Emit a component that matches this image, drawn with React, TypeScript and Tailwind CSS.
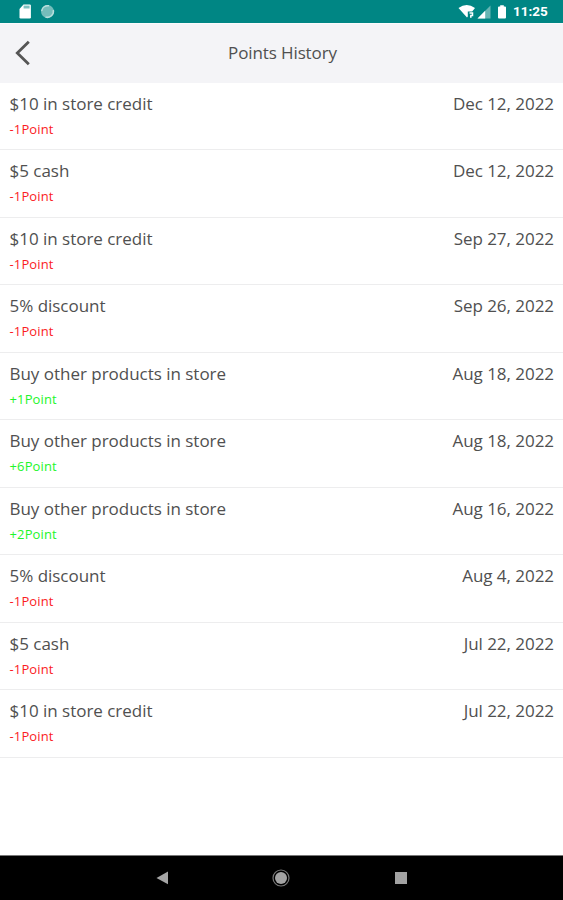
type Entry = { title: string; points: string; date: string };

const entries: Entry[] = [
  { title: "$10 in store credit", points: "-1Point", date: "Dec 12, 2022" },
  { title: "$5 cash", points: "-1Point", date: "Dec 12, 2022" },
  { title: "$10 in store credit", points: "-1Point", date: "Sep 27, 2022" },
  { title: "5% discount", points: "-1Point", date: "Sep 26, 2022" },
  { title: "Buy other products in store", points: "+1Point", date: "Aug 18, 2022" },
  { title: "Buy other products in store", points: "+6Point", date: "Aug 18, 2022" },
  { title: "Buy other products in store", points: "+2Point", date: "Aug 16, 2022" },
  { title: "5% discount", points: "-1Point", date: "Aug 4, 2022" },
  { title: "$5 cash", points: "-1Point", date: "Jul 22, 2022" },
  { title: "$10 in store credit", points: "-1Point", date: "Jul 22, 2022" },
];

function StatusBar() {
  return (
    <div className="flex h-[23px] shrink-0 items-center bg-[#008684] pr-[15px] pl-[19px] text-white">
      <svg width="13" height="15" viewBox="0 0 13 15">
        <path d="M4.5 0.5h6.2q1.2 0 1.2 1.2v11.6q0 1.2-1.2 1.2H1.7q-1.2 0-1.2-1.2V5z" fill="#fff" />
        <path d="M4.6 1.6h6v2.9h-6z" fill="#008684" fillOpacity=".5" />
      </svg>
      <svg className="ml-[8px]" width="15" height="15" viewBox="0 0 15 15">
        <circle cx="7.5" cy="7.5" r="6.5" fill="#75bdbb" />
        <path d="M1.7 7A6 6 0 0 1 9 1.8M13.3 6A6 6 0 0 1 5.5 13" fill="none" stroke="#b9dfdd" strokeWidth="1.5" />
      </svg>
      <svg className="ml-auto" width="18" height="15" viewBox="0 0 18 15">
        <path d="M0.5 4Q8.7-2.2 17 4l-2.8 3.4h-4.4v5.2L9 13.6z" fill="#fff" />
        <path d="M11.5 9h3v2.6h-2.4M12 13h1.6" fill="none" stroke="#fff" strokeWidth="1.5" />
      </svg>
      <svg className="ml-px" width="14" height="14" viewBox="0 0 14 14">
        <path d="M13.5 0.5v13H0.5z" fill="#67b6b4" />
        <path d="M8.2 5.8v7.7H0.5z" fill="#fff" />
      </svg>
      <svg className="ml-[6px]" width="10" height="14" viewBox="0 0 10 14">
        <path d="M3.2 0.3h3.6v1.3h1.2q1 0 1 1v10q0 1-1 1h-6q-1 0-1-1v-10q0-1 1-1h1.2z" fill="#fff" />
      </svg>
      <span className="ml-[6px] w-[35px] pt-px font-['Roboto',sans-serif] text-[13.5px] leading-none font-bold whitespace-nowrap">11:25</span>
    </div>
  );
}

function Header() {
  return (
    <header className="grid h-[59.5px] shrink-0 grid-cols-[1fr_auto_1fr] items-center border-t border-[#fafafc] bg-[#f4f4f7] px-[14px]">
      <button aria-label="Back" className="w-5">
        <svg width="18" height="26" viewBox="0 0 18 26">
          <path d="M14.8 1.7L3.3 13l11.5 11.2" fill="none" stroke="#555" strokeWidth="2.8" />
        </svg>
      </button>
      <h1 className="pl-[2px] text-[17px] leading-6 tracking-[-0.11px]">Points History</h1>
    </header>
  );
}

function Row({ title, points, date }: Entry) {
  return (
    <li className="flex h-[67.5px] justify-between border-b border-[#ededee] pt-[9px] pr-[9px] pl-[9.5px]">
      <div>
        <div className="text-[17px] leading-6 tracking-[-0.02px]">{title}</div>
        <div className={`mt-[4px] text-[13px] leading-[18px] tracking-[0.14px] ${points.startsWith("+") ? "text-[#1ef52b]" : "text-[#fb1c24]"}`}>
          {points}
        </div>
      </div>
      <div className="text-[17px] leading-6 tracking-[-0.04px]">{date}</div>
    </li>
  );
}

function NavigationBar() {
  return (
    <nav className="flex h-[45px] shrink-0 items-center justify-between border-t border-[#777] bg-black pr-[156px] pl-[155px]">
      <svg width="14" height="16" viewBox="0 0 14 16"><path d="M13 1.5v12.8L1.5 8z" fill="#a5a5a5" /></svg>
      <svg className="mr-[2px]" width="20" height="20" viewBox="0 0 20 20">
        <circle cx="10" cy="10" r="6" fill="#a3a3a3" />
        <circle cx="10" cy="10" r="8" fill="none" stroke="#777" strokeWidth="1.2" />
      </svg>
      <div className="h-3 w-3 bg-[#a2a2a2]" />
    </nav>
  );
}

export default function App() {
  return (
    <div className="flex h-[900px] w-full flex-col overflow-hidden bg-white font-['Open_Sans',sans-serif] text-[#505050]">
      <StatusBar />
      <Header />
      <ul className="flex-1">
        {entries.map((entry, i) => <Row key={i} {...entry} />)}
      </ul>
      <NavigationBar />
    </div>
  );
}
